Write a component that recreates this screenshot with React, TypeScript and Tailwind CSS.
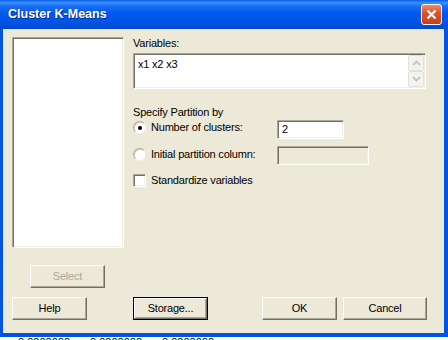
import React from 'react';

const font = { fontFamily: '"Liberation Sans", Arial, sans-serif' };

const sunken =
  'border border-t-[#aca899] border-l-[#aca899] border-b-white border-r-white shadow-[inset_1px_1px_0_#716f64,inset_-1px_-1px_0_#f1efe2]';

const Btn = ({ label, w, disabled, isDefault }: { label: string; w: string; disabled?: boolean; isDefault?: boolean }) => (
  <div className={`${w} h-[23px] ${isDefault ? 'border border-black' : ''}`}>
    <div
      className={`w-full h-full flex items-center justify-center bg-[#ece9d8] border border-t-white border-l-white border-b-[#716f64] border-r-[#716f64] shadow-[inset_-1px_-1px_0_#aca899] text-[11px] tracking-[-0.2px] ${
        disabled ? 'text-[#aca899]' : 'text-black'
      }`}
    >
      {label}
    </div>
  </div>
);

const Radio = ({ checked }: { checked?: boolean }) => (
  <div className="w-[13px] h-[13px] rounded-full bg-white border border-t-[#aca899] border-l-[#aca899] border-b-[#f4f2ea] border-r-[#f4f2ea] shadow-[inset_1px_1px_0_#d4d0c8] flex items-center justify-center">
    {checked && <div className="w-[4px] h-[4px] rounded-full bg-black" />}
  </div>
);

const SpinArrow = ({ up }: { up?: boolean }) => (
  <div className="w-[16px] h-[16px] rounded-[2px] bg-[#f4f3ee] border border-[#e3e1d6] flex items-center justify-center">
    <svg width="9" height="6" viewBox="0 0 9 6">
      <path d={up ? 'M1 5 L4.5 1.5 L8 5' : 'M1 1 L4.5 4.5 L8 1'} fill="none" stroke="#c9c7b8" strokeWidth="2" />
    </svg>
  </div>
);

export default function App() {
  return (
    <div className="w-[448px] h-[340px] bg-white overflow-hidden" style={font}>
      <div className="w-[448px] h-[337px] flex flex-col">
        {/* title bar */}
        <div className="h-[29px] flex items-center justify-between pl-[8px] pr-[6px] bg-[linear-gradient(to_bottom,#0b5ee6_0%,#3c92fd_10%,#1d70f3_20%,#0058ee_45%,#0054e5_80%,#0047c9_100%)]">
          <span className="text-white font-bold text-[12.5px] [text-shadow:1px_1px_0_#0a2a8a]" style={font}>
            Cluster K-Means
          </span>
          <div className="w-[21px] h-[21px] rounded-[3px] border border-white bg-[linear-gradient(to_bottom,#f08a6a,#e0522c_40%,#c83d18)] flex items-center justify-center">
            <svg width="11" height="11" viewBox="0 0 11 11">
              <path d="M1.5 1.5 L9.5 9.5 M9.5 1.5 L1.5 9.5" stroke="white" strokeWidth="2.2" />
            </svg>
          </div>
        </div>

        {/* body */}
        <div className="flex-1 flex flex-col bg-[#ece9d8] border-l-[3px] border-r-[4px] border-b-[4px] border-[#0054e3] text-[11px] tracking-[-0.2px] text-black">
          <div className="flex pt-[8px] pl-[9px]">
            {/* left column */}
            <div className="flex flex-col w-[112px]">
              <div className={`h-[211px] bg-white ${sunken}`} />
              <div className="mt-[17px] ml-[18px]">
                <Btn label="Select" w="w-[75px]" disabled />
              </div>
            </div>

            {/* right column */}
            <div className="flex flex-col ml-[9px]">
              <div className="h-[13px] leading-[13px]">Variables:</div>
              <div className={`mt-[3px] w-[293px] h-[36px] bg-white ${sunken} flex justify-between pl-[4px] pt-[4px] pr-[1px]`}>
                <span className="leading-[13px]">x1 x2 x3</span>
                <div className="flex flex-col -mt-[3px]">
                  <SpinArrow up />
                  <SpinArrow />
                </div>
              </div>

              <div className="mt-[17px] h-[13px] leading-[13px]">Specify Partition by</div>

              <div className="mt-[1px] flex items-center">
                <div className="w-[144px] flex items-center gap-[5px] mb-[4px]">
                  <Radio checked />
                  <span className="leading-[13px]">Number of clusters:</span>
                </div>
                <div className={`w-[67px] h-[19px] bg-white ${sunken} pl-[4px] flex items-center`}>2</div>
              </div>

              <div className="mt-[7px] flex items-center">
                <div className="w-[144px] flex items-center gap-[5px] mb-[3px]">
                  <Radio />
                  <span className="leading-[13px]">Initial partition column:</span>
                </div>
                <div className={`w-[92px] h-[19px] bg-[#ece9d8] ${sunken}`} />
              </div>

              <div className="mt-[9px] flex items-center gap-[5px]">
                <div className={`w-[13px] h-[13px] bg-white ${sunken}`} />
                <span className="leading-[13px]">Standardize variables</span>
              </div>
            </div>
          </div>

          {/* bottom buttons */}
          <div className="mt-[9px] flex pl-[9px]">
            <Btn label="Help" w="w-[75px]" />
            <div className="ml-[46px]">
              <Btn label="Storage..." w="w-[75px]" isDefault />
            </div>
            <div className="ml-[54px]">
              <Btn label="OK" w="w-[75px]" />
            </div>
            <div className="ml-[6px]">
              <Btn label="Cancel" w="w-[84px]" />
            </div>
          </div>
        </div>
      </div>

      {/* worksheet peeking out below */}
      <div className="h-[3px] overflow-hidden flex text-[11px] leading-[13px] text-black">
        <span className="ml-[18px] -mt-[1px]">0.0000000</span>
        <span className="ml-[20px] -mt-[1px]">0.0000000</span>
        <span className="ml-[20px] -mt-[1px]">0.0000000</span>
      </div>
    </div>
  );
}
